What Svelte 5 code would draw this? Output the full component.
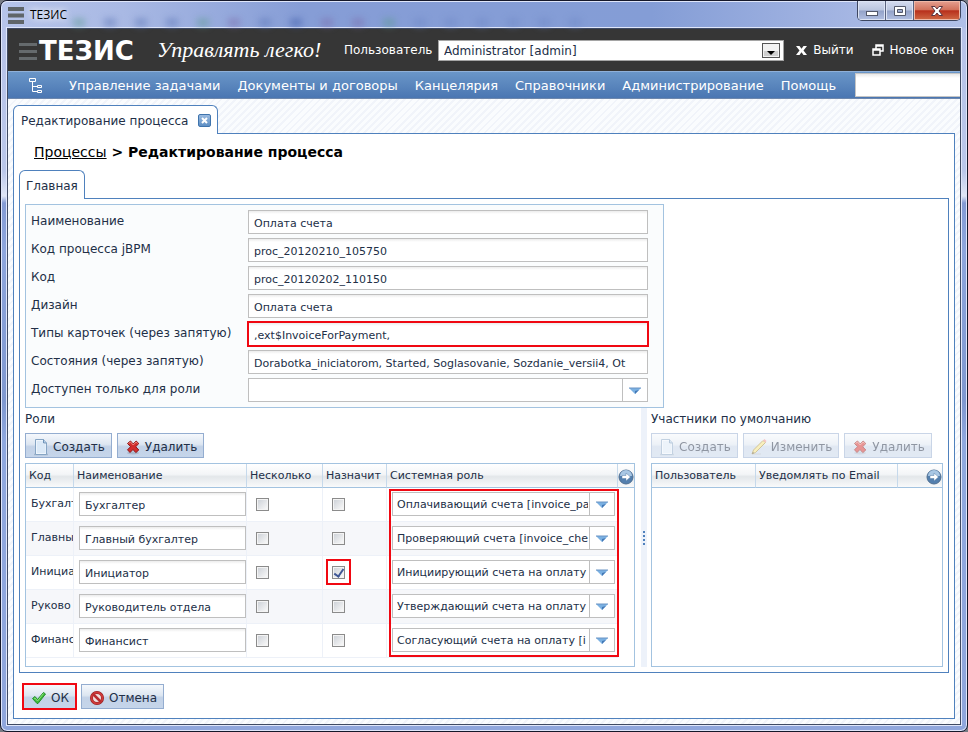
<script>
  const menu = ['Управление задачами', 'Документы и договоры', 'Канцелярия', 'Справочники', 'Администрирование', 'Помощь'];

  const fields = [
    { id: 'name', label: 'Наименование', value: 'Оплата счета' },
    { id: 'jbpm', label: 'Код процесса jBPM', value: 'proc_20120210_105750' },
    { id: 'code', label: 'Код', value: 'proc_20120202_110150' },
    { id: 'design', label: 'Дизайн', value: 'Оплата счета' },
    { id: 'types', label: 'Типы карточек (через запятую)', value: ',ext$InvoiceForPayment,', marked: true },
    { id: 'states', label: 'Состояния (через запятую)', value: 'Dorabotka_iniciatorom, Started, Soglasovanie, Sozdanie_versii4, Ot' }
  ];

  const roles = [
    { code: 'Бухгалт', name: 'Бухгалтер', assign: false, system: 'Оплачивающий счета [invoice_pa' },
    { code: 'Главны', name: 'Главный бухгалтер', assign: false, system: 'Проверяющий счета [invoice_che' },
    { code: 'Инициа', name: 'Инициатор', assign: true, system: 'Инициирующий счета на оплату' },
    { code: 'Руково', name: 'Руководитель отдела', assign: false, system: 'Утверждающий счета на оплату' },
    { code: 'Финанс', name: 'Финансист', assign: false, system: 'Согласующий счета на оплату [i' }
  ];
</script>

{#snippet page()}
  <svg class="ico" width="16" height="18" viewBox="0 0 16 18" aria-hidden="true">
    <path d="M1 16.5h14" stroke="#8fa0b5" stroke-width="1.5" opacity=".6" />
    <path d="M2.5 1.5h8l3 3.500v11.500h-11z" fill="#eef5fc" stroke="#86a5c4" />
    <path d="M4 3h6v3h2.500v9h-8.500z" fill="#dbe9f7" />
    <path d="M10.500 1.500v3.500h3" fill="#b7d0e8" stroke="#6f93b8" />
  </svg>
{/snippet}

{#snippet cross()}
  <svg class="ico" width="16" height="18" viewBox="0 0 16 18" aria-hidden="true">
    <ellipse cx="8" cy="15" rx="6" ry="1.500" fill="#8090a5" opacity=".4" />
    <path d="M2.500 5.500l3-2.500 2.700 3 3-3 2.600 2.600-3.100 3.100 3.100 3.300-3 2.600-2.800-3.100-3 3-2.500-2.700 3.100-3.100z" fill="#d22c2c" stroke="#8e1515" />
    <path d="M3.500 5.500l2-1.500 2.700 3 3-3 1.300 1.500" stroke="#f08a80" fill="none" />
  </svg>
{/snippet}

{#snippet arrow()}
  <svg class="arrow" width="12" height="7" viewBox="0 0 12 7" aria-hidden="true">
    <path d="M0 1h12L6 7z" fill="#7ab0e2" /><path d="M0 1h12" stroke="#6a94c4" /><path d="M6 7l4-4L6 4z" fill="#4478b5" />
  </svg>
{/snippet}

{#snippet go()}
  <button class="go" aria-label="Настройка колонок">
    <svg width="16" height="16" viewBox="0 0 16 16" aria-hidden="true">
      <circle cx="8" cy="8" r="7" fill="#537fae" stroke="#4f6f92" />
      <path d="M2 7a6 6 0 0 1 12 0z" fill="#a9c7e4" />
      <path d="M4 6.500h4V4l4.500 4L8 12V9.500H4z" fill="#fff" stroke="#5a80a8" stroke-width=".5" />
    </svg>
  </button>
{/snippet}

<div class="window">
  <header class="titlebar">
    <svg width="16" height="17" viewBox="0 0 16 17" aria-hidden="true"><path d="M0 2h16M0 8.500h16M0 15h16" stroke="#5f6569" stroke-width="4" /></svg>
    <span class="caption">ТЕЗИС</span>
    <div class="haze" aria-hidden="true">
      <i class="green"></i><i></i><i></i><i></i><i class="green"></i><i class="plum"></i><i></i><i class="dark"></i><i class="plum"></i><i class="plum"></i><i class="green"></i><i class="pale"></i><i class="pale"></i><i class="pale"></i><i class="pale"></i><i class="pale"></i><i class="pale"></i>
    </div>
    <div class="controls">
      <button aria-label="Свернуть"><svg width="14" height="12" viewBox="0 0 14 12"><rect x="1.500" y="6.500" width="11" height="4" fill="#fff" stroke="#53596b" /></svg></button>
      <button aria-label="Развернуть"><svg width="14" height="12" viewBox="0 0 14 12"><path fill-rule="evenodd" d="M1.500 1.500h11v9h-11zM4.500 4.500h5v3h-5z" fill="#fff" stroke="#53596b" /></svg></button>
      <button class="close" aria-label="Закрыть"><svg width="14" height="12" viewBox="0 0 14 12"><path d="M1.500 1.500h3.500l2 2.500 2-2.500h3.500L9 6l3.500 4.500H9L7 8l-2 2.500H1.500L5 6z" fill="#fff" stroke="#5b3540" /></svg></button>
    </div>
  </header>

  <div class="client">
    <div class="brandbar">
      <svg class="bars" width="18" height="17" viewBox="0 0 18 17" aria-hidden="true"><path d="M0 1.500h18M0 8.500h18M0 15.500h18" stroke="#656a6d" stroke-width="3" /></svg>
      <span class="logo">ТЕЗИС</span>
      <span class="slogan">Управлять легко!</span>
      <label for="user">Пользователь</label>
      <div class="user">
        <select id="user"><option>Administrator [admin]</option></select>
        <svg width="18" height="15" viewBox="0 0 18 15" aria-hidden="true"><rect x=".5" y=".5" width="17" height="14" fill="#f2f2f2" stroke="#555" /><rect x="2" y="8" width="14" height="5" fill="#cfcfcf" /><path d="M5 8h8l-4 4z" fill="#000" /></svg>
      </div>
      <a class="tool exit" href="#exit">
        <svg width="11" height="11" viewBox="0 0 11 11" aria-hidden="true"><path d="M0 1h3.500l2 2.800L7.500 1H11L7.500 5.500 11 10H7.500l-2-2.800-2 2.800H0l3.500-4.500z" fill="#fff" /></svg>
        Выйти
      </a>
      <a class="tool" href="#new">
        <svg width="12" height="12" viewBox="0 0 12 12" aria-hidden="true"><path d="M4 5V1h7v6H8M4 2h7M1 5h7v6H1zM1 6h7" fill="none" stroke="#fff" stroke-width="1.500" /></svg>
        Новое окн
      </a>
    </div>

    <nav class="menu">
      <svg width="14" height="15" viewBox="0 0 14 15" aria-hidden="true"><path d="M.5.5h6v3h-6zM8.500 7.500h4v2h-4zM8.500 12.500h4v2h-4zM3.500 4v9.500h5M3.500 8.500h5" fill="none" stroke="#fff" /></svg>
      {#each menu as item}<a href="#menu">{item}</a>{/each}
      <input aria-label="Поиск" />
    </nav>

    <main>
      <div class="tab outer-tab">
        Редактирование процесса
        <button class="tab-close" aria-label="Закрыть вкладку"><svg width="7" height="7" viewBox="0 0 7 7"><path d="M1 1l5 5M6 1L1 6" stroke="#fff" stroke-width="2" /></svg></button>
      </div>
      <section class="outer">
        <h1><a href="#processes">Процессы</a> &gt; Редактирование процесса</h1>
        <div class="tab inner-tab">Главная</div>
        <section class="inner">
          <form class="fields">
            {#each fields as f}
              <label for={f.id}>{f.label}</label>
              <input id={f.id} class:marked={f.marked} value={f.value} />
            {/each}
            <label for="only">Доступен только для роли</label>
            <div class="combo"><select id="only"><option></option></select>{@render arrow()}</div>
          </form>

          <div class="split">
            <div class="pane roles">
              <h2>Роли</h2>
              <div class="buttons">
                <button class="btn">{@render page()}Создать</button>
                <button class="btn">{@render cross()}Удалить</button>
              </div>
              <div class="grid">
                <table>
                  <colgroup><col class="c1" /><col class="c2" /><col class="c3" /><col class="c4" /><col /><col class="c6" /></colgroup>
                  <thead>
                    <tr><th>Код</th><th>Наименование</th><th>Несколько</th><th>Назначит</th><th>Системная роль</th><th class="last">{@render go()}</th></tr>
                  </thead>
                  <tbody>
                    {#each roles as r}
                      <tr>
                        <td class="code">{r.code}</td>
                        <td class="name"><input value={r.name} aria-label="Наименование" /></td>
                        <td class="tick"><span><input type="checkbox" aria-label="Несколько" /></span></td>
                        <td class="tick"><span class:marked={r.assign}><input type="checkbox" checked={r.assign} aria-label="Назначить" /></span></td>
                        <td class="system"><div class="combo"><select aria-label="Системная роль"><option>{r.system}</option></select>{@render arrow()}</div></td>
                        <td class="last"></td>
                      </tr>
                    {/each}
                  </tbody>
                </table>
                <div class="frame"></div>
              </div>
            </div>
            <div class="splitter"><i></i><i></i><i></i><i></i></div>
            <div class="pane members">
              <h2>Участники по умолчанию</h2>
              <div class="buttons">
                <button class="btn" disabled>{@render page()}Создать</button>
                <button class="btn" disabled>
                  <svg class="ico" width="16" height="18" viewBox="0 0 16 18" aria-hidden="true"><path d="M2 16h8" stroke="#999" opacity=".5" /><path d="M1 16l1.500-4L12 2.500 14.500 4.500 4.500 14.500z" fill="#f3e07d" stroke="#a58a35" /><path d="M12 2.500L13.500 1l2 2-1 1.500z" fill="#ef8a8a" /><path d="M1 16l1-2 1 1z" fill="#333" /></svg>
                  Изменить
                </button>
                <button class="btn" disabled>{@render cross()}Удалить</button>
              </div>
              <div class="grid">
                <table>
                  <colgroup><col class="m1" /><col class="m2" /><col /></colgroup>
                  <thead><tr><th>Пользователь</th><th>Уведомлять по Email</th><th class="last">{@render go()}</th></tr></thead>
                </table>
              </div>
            </div>
          </div>
        </section>

        <footer>
          <button class="btn marked">
            <svg class="ico" width="16" height="18" viewBox="0 0 16 18" aria-hidden="true"><path d="M1.500 9.500l2.500-2 2.500 3 6-7 2 1.500-7.500 9.500H6z" fill="#3dbb3a" stroke="#23902a" /><path d="M3 9.500l1-.5 2.500 3 6-7.500" stroke="#8ee07c" fill="none" /></svg>
            ОК
          </button>
          <button class="btn">
            <svg class="ico" width="16" height="18" viewBox="0 0 16 18" aria-hidden="true"><circle cx="8" cy="9" r="5.500" fill="#f1dede" stroke="#8d1f22" stroke-width="3" /><circle cx="8" cy="9" r="5.500" fill="none" stroke="#cf3a3a" stroke-width="2" /><path d="M4 5l8 8" stroke="#b92c2f" stroke-width="2.500" /></svg>
            Отмена
          </button>
        </footer>
      </section>
    </main>
  </div>
</div>

<style>
  :global(body) {
    background: #777b84;
  }
  * {
    box-sizing: border-box;
  }
  .window {
    --line: #4f81bd;
    --soft: #a3c3e0;
    --ink: #222f47;
    --mark: #f00812;
    min-height: 100vh;
    display: flex;
    flex-direction: column;
    padding: 0 6px 6px 6px;
    border: 1px solid #15182a;
    border-radius: 7px;
    background: linear-gradient(#b6c2e9 0, #bac7ea 170px, #e0e6f5 195px, #849bd4 202px, #8ea6dd 250px, #7f98d0 400px, #8fa8df 440px, #8fa6dc 100%);
    box-shadow: inset 0 0 0 1px #dfe6fa;
    font-family: Verdana, 'DejaVu Sans', sans-serif;
    font-size: 12px;
    line-height: 16px;
    color: var(--ink);
  }
  button, input, select {
    font: inherit;
    color: inherit;
    margin: 0;
    border-radius: 0;
  }
  svg {
    display: block;
    flex: none;
  }
  .titlebar {
    height: 27px;
    display: flex;
    align-items: flex-start;
    margin: 0 -5px;
    padding: 0 5px 0 6px;
    border-radius: 6px 6px 0 0;
    border-top: 1px solid #dfe6fa;
    background: linear-gradient(90deg, #b6c4ea 0, #a9b9e4 120px, #869dd6 300px, #849dd6 650px, #a5b6e3 850px, #b0c0e8 100%);
  }
  .titlebar > svg {
    margin-top: 5px;
  }
  .caption {
    margin: 5px 0 0 6px;
    font-family: 'Open Sans', 'Noto Sans', sans-serif;
    color: #000;
    text-shadow: 0 0 6px #fff, 0 0 8px #fff;
  }
  .haze {
    flex: 1;
    min-width: 0;
    overflow: hidden;
    display: flex;
    gap: 19px;
    padding: 16px 0 0 6px;
    filter: blur(3px);
  }
  .haze i {
    flex: none;
    width: 12px;
    height: 9px;
    background: #5e76b5;
    opacity: 0.45;
  }
  .haze .green { background: #5e9c92; }
  .haze .plum { background: #7d6cab; }
  .haze .dark { background: #3e5aa8; }
  .haze .pale { background: #6f88c5; }
  .controls {
    display: flex;
    width: 104px;
    height: 20px;
    margin-top: -1px;
    border: 1px solid #3d4661;
    border-top: 0;
    border-radius: 0 0 5px 5px;
    overflow: hidden;
  }
  .controls button {
    width: 28px;
    padding: 0;
    display: flex;
    align-items: center;
    justify-content: center;
    border: 0;
    border-right: 1px solid #59627f;
    background: linear-gradient(#d5dcf0 0, #bac5df 48%, #93a2c8 52%, #b2c0e2 100%);
    box-shadow: inset 0 0 0 1px #dde4f4;
  }
  .controls .close {
    flex: 1;
    border: 0;
    background: linear-gradient(#e5a091 0, #d2735d 45%, #b8301c 52%, #cf6a45 100%);
    box-shadow: inset 0 0 0 1px #efb8a6;
  }
  .client {
    flex: 1;
    display: flex;
    flex-direction: column;
    min-width: 0;
    border: 1px solid #3f4a63;
    box-shadow: 0 0 0 1px #dfe6fa;
    background: #fff;
  }
  .brandbar {
    height: 42px;
    display: flex;
    align-items: center;
    overflow: hidden;
    padding: 0 6px 0 11px;
    background: #363636;
    color: #fff;
    white-space: nowrap;
  }
  .bars {
    margin-top: 2px;
  }
  .logo {
    width: 120px;
    padding: 2px 0 0 2px;
    font-size: 26px;
    line-height: 28px;
    font-weight: bold;
  }
  .slogan {
    width: 187px;
    font-family: 'Liberation Serif', serif;
    font-style: italic;
    font-size: 22px;
    line-height: 28px;
  }
  .brandbar label {
    width: 94px;
  }
  .user {
    flex: 1;
    min-width: 0;
    height: 21px;
    display: flex;
    align-items: center;
    padding-right: 3px;
    border: 1px solid #a5a5a5;
    background: #fff;
  }
  .user select {
    flex: 1;
    min-width: 0;
    height: 19px;
    padding: 1px 5px 0;
    border: 0;
    appearance: none;
    background: #fff;
    color: #222f47;
  }
  .tool {
    display: flex;
    align-items: center;
    gap: 6px;
    margin-left: 18px;
    color: #fff;
    text-decoration: none;
  }
  .exit {
    margin-left: 12px;
  }
  .menu {
    height: 28px;
    display: flex;
    align-items: center;
    gap: 17px;
    overflow: hidden;
    padding-left: 21px;
    border-top: 1px solid #8fb0d8;
    border-bottom: 1px solid #6d87ad;
    background: linear-gradient(#6a96c8, #4a76b2);
    font-size: 13px;
    white-space: nowrap;
  }
  .menu svg {
    margin-right: 9px;
  }
  .menu a {
    padding-top: 1px;
    color: #fff;
    text-decoration: none;
  }
  .menu input {
    flex: 1;
    min-width: 0;
    height: 24px;
    margin-left: 2px;
    border: 1px solid #c5c5c5;
    border-right: 0;
    background: linear-gradient(#e8e8e8, #fff 4px);
  }
  main {
    flex: 1;
    display: flex;
    flex-direction: column;
    padding: 6px 5px 5px;
    background: repeating-linear-gradient(135deg, #f1f4fa 0 2px, #fafcfe 2px 5px);
  }
  .tab {
    position: relative;
    align-self: flex-start;
    display: flex;
    align-items: center;
    height: 29px;
    margin-bottom: -1px;
    padding: 2px 6px 0;
    border: 1px solid var(--line);
    border-bottom: 0;
    border-radius: 6px 6px 0 0;
    background: #fff;
  }
  .outer-tab {
    gap: 10px;
    padding-left: 7px;
  }
  .tab-close {
    display: flex;
    align-items: center;
    justify-content: center;
    width: 13px;
    height: 13px;
    margin-bottom: 2px;
    padding: 0;
    border: 1px solid #3f74ad;
    border-radius: 2px;
    background: linear-gradient(#9bbbe0, #5e8fc4);
  }
  .outer {
    flex: 1;
    display: flex;
    flex-direction: column;
    padding: 8px 5px 9px;
    border: 1px solid var(--line);
    background: #fff;
  }
  h1 {
    margin: 0 0 8px 15px;
    font-size: 14px;
    line-height: 20px;
    color: #000;
  }
  h1 a {
    color: #000;
    font-weight: normal;
  }
  .inner {
    flex: 1;
    display: flex;
    flex-direction: column;
    padding: 5px;
    border: 1px solid var(--line);
  }
  .fields {
    align-self: flex-start;
    display: grid;
    grid-template-columns: 217px 400px;
    gap: 4px 0;
    padding: 5px 15px 5px 5px;
    border: 1px solid var(--soft);
    background: #fafcfd;
    white-space: nowrap;
  }
  .fields label {
    padding-top: 3px;
  }
  .fields input, .name input {
    width: 100%;
    height: 24px;
    padding: 2px 5px 0;
    border: 1px solid #bfbfbf;
    outline: 0;
    background: linear-gradient(#ececec, #fff 3px);
    font-size: 11px;
  }
  .combo {
    display: flex;
    position: relative;
    height: 24px;
    border: 1px solid #bfbfbf;
    background: linear-gradient(90deg, #fff calc(100% - 25px), #bfbfbf calc(100% - 25px), #bfbfbf calc(100% - 24px), #fff calc(100% - 24px));
  }
  .combo select {
    flex: 1;
    min-width: 0;
    padding: 2px 0 0 4px;
    margin-right: 26px;
    border: 0;
    appearance: none;
    background: none;
    font-size: 11px;
  }
  .arrow {
    position: absolute;
    right: 6px;
    top: 8px;
  }
  .fields .marked, .btn.marked, span.marked {
    outline: 2px solid var(--mark);
    outline-offset: -1px;
  }
  .split {
    flex: 1;
    display: flex;
  }
  .pane {
    display: flex;
    flex-direction: column;
    min-width: 0;
  }
  .roles {
    flex: 1;
    margin-right: 6px;
  }
  .members {
    width: 292px;
    margin-left: 4px;
  }
  .splitter {
    width: 6px;
    display: flex;
    flex-direction: column;
    align-items: center;
    justify-content: center;
    gap: 2px;
    background: #edf2fa;
  }
  .splitter i {
    width: 2px;
    height: 2px;
    background: var(--line);
  }
  h2 {
    margin: 3px 0 6px;
    font-size: 12px;
    font-weight: normal;
    line-height: 16px;
  }
  .buttons {
    display: flex;
    gap: 5px;
    margin-bottom: 5px;
  }
  .btn {
    height: 25px;
    display: flex;
    align-items: center;
    gap: 4px;
    padding: 2px 6px 0 7px;
    border: 1px solid #94add0;
    background: linear-gradient(#f5f8fc 0, #dde6f1 45%, #c3d2e7 55%, #c5d5ea 100%);
    white-space: nowrap;
  }
  .btn:disabled {
    opacity: 0.5;
  }
  .grid {
    position: relative;
    flex: 1;
    border: 1px solid var(--soft);
  }
  table {
    width: 100%;
    table-layout: fixed;
    border-collapse: separate;
    border-spacing: 0;
    font-size: 11px;
  }
  .c1 { width: 48px; }
  .c2 { width: 173px; }
  .c3 { width: 76px; }
  .c4 { width: 64px; }
  .c6 { width: 16px; }
  .m1 { width: 104px; }
  .m2 { width: 142px; }
  th {
    height: 24px;
    padding: 0 0 0 3px;
    border-right: 1px solid #c6d9eb;
    border-bottom: 1px solid var(--soft);
    background: linear-gradient(#fff 0, #f3f5f7 45%, #e3e7ea 55%, #f9fafb 100%);
    font-weight: normal;
    text-align: left;
    white-space: nowrap;
  }
  th.last {
    padding: 0;
    border-right: 0;
  }
  .go {
    display: block;
    width: 16px;
    height: 16px;
    margin: 2px 0 0 auto;
    padding: 0;
    border: 0;
    background: none;
  }
  td {
    height: 34px;
    padding: 0 0 1px;
    overflow: hidden;
    white-space: nowrap;
    border-right: 1px solid #edf1f8;
    border-bottom: 1px solid #edf1f8;
  }
  td.last {
    border: 0;
  }
  tr:nth-child(even) td:not(.last) {
    background: #f6f7fa;
  }
  .code {
    padding-left: 5px;
  }
  .name {
    padding-left: 5px;
  }
  .tick span {
    display: flex;
    align-items: center;
    justify-content: center;
    width: 23px;
    height: 24px;
    margin-left: 4px;
  }
  .tick input {
    appearance: none;
    width: 13px;
    height: 13px;
    border: 1px solid #8b8b8b;
    background: linear-gradient(135deg, #cfd3d9, #f8f8f8) center / 9px 9px no-repeat #f4f4f4;
    position: relative;
  }
  .tick input:checked::after {
    content: '';
    position: absolute;
    left: 3px;
    top: 0;
    width: 4px;
    height: 8px;
    border: solid #3f5795;
    border-width: 0 2px 2px 0;
    transform: rotate(35deg);
  }
  .system {
    padding: 0 2px 1px 5px;
  }
  .frame {
    position: absolute;
    top: 25px;
    right: 15px;
    left: 363px;
    height: 168px;
    border: 2px solid var(--mark);
    pointer-events: none;
  }
  footer {
    display: flex;
    gap: 5px;
    margin: 11px 0 0 4px;
  }
</style>
